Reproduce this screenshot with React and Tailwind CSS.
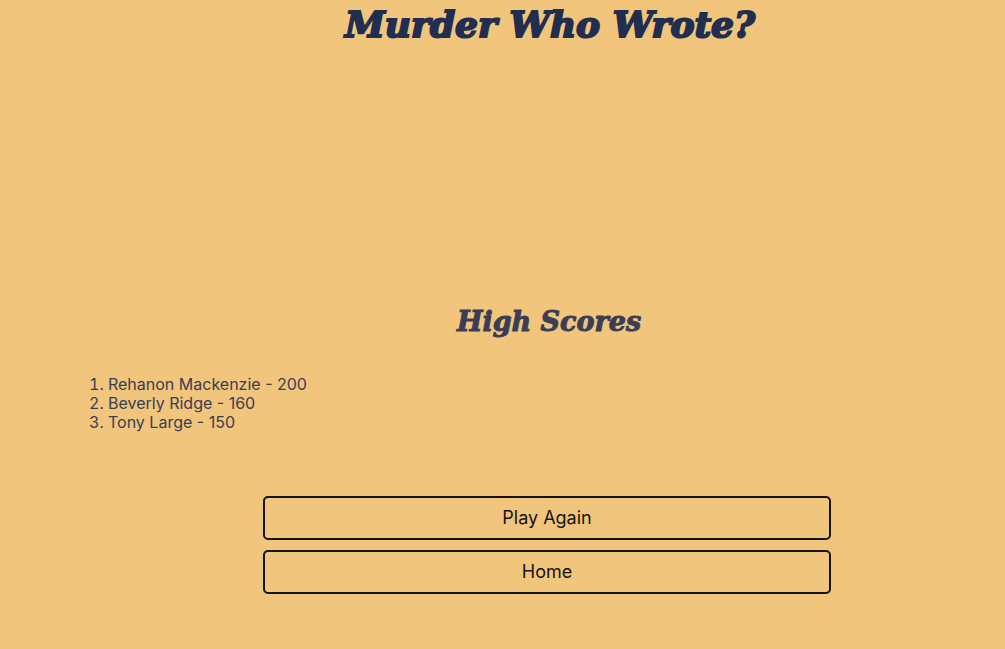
export default function App() {
  return (
    <div className="min-h-screen bg-[#f1c57c] pl-[89px] font-['Inter','Noto_Sans',sans-serif] text-[#393d55]">
      <header className="flex h-12 items-center justify-center pl-1.5">
        <h1 className="font-['DejaVu_Serif',serif] text-[36px] leading-none font-bold italic text-[#212e50] [-webkit-text-stroke:2px_#212e50]">Murder Who Wrote?</h1>
      </header>
      <main className="pt-[250px] pb-14">
        <h2 className="pl-1 text-center font-['DejaVu_Serif',serif] text-[27px] leading-[48px] font-bold italic [-webkit-text-stroke:1px_#393d55]">High Scores</h2>
        <ol className="mt-[29px] list-inside list-decimal text-[16px] leading-[19px]">
          <li>Rehanon Mackenzie - 200</li>
          <li>Beverly Ridge - 160</li>
          <li>Tony Large - 150</li>
        </ol>
        <div className="mx-auto mt-16 flex w-[62%] flex-col gap-[10px] text-[#15130f]">
          <button className="h-11 rounded-[5px] border-2 border-[#15130f] pb-0.5 text-[18px]">Play Again</button>
          <button className="h-11 rounded-[5px] border-2 border-[#15130f] pb-0.5 text-[18px]">Home</button>
        </div>
      </main>
    </div>
  );
}
